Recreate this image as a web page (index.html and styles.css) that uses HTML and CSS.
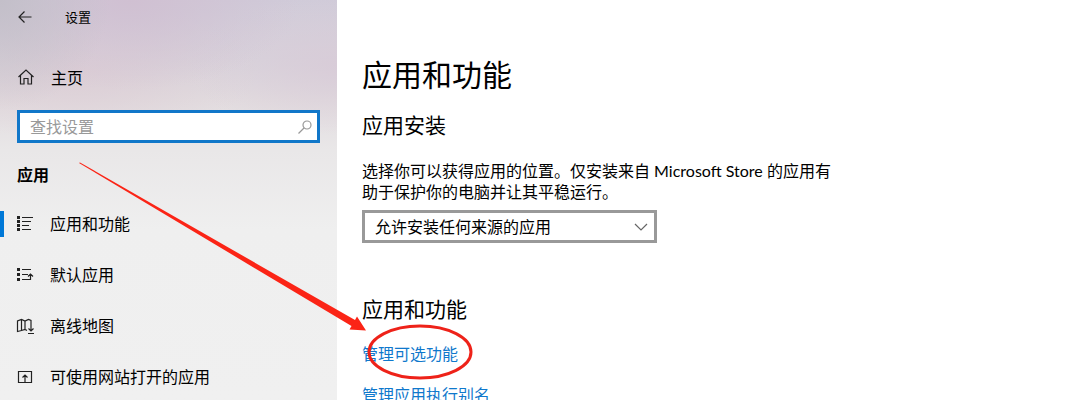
FILE: index.html
```html
<!DOCTYPE html>
<html lang="zh-CN">
<head>
    <meta charset="UTF-8">
    <meta name="viewport" content="width=device-width, initial-scale=1.0">
    <title>设置</title>
    <link rel="stylesheet" href="styles.css">
</head>
<body>
    <div class="window">
        <aside class="side">
            <header class="side-top">
                <button class="back" type="button" aria-label="返回">
                    <svg width="16" height="16" viewBox="0 0 16 16"><path d="M14.5 8H2M7.500 2.500L2 8l5.500 5.500"/></svg>
                </button>
                <span class="side-title">设置</span>
            </header>
            <a class="home" href="#">
                <svg width="18" height="18" viewBox="0 0 18 18"><path d="M1.500 9L9 2l7.500 7M3.500 7.500V16H7v-5.500h4V16h3.500V7.500"/></svg>
                <span>主页</span>
            </a>
            <form class="search">
                <input type="text" placeholder="查找设置" aria-label="查找设置">
                <button class="search-btn" type="button" aria-label="搜索">
                    <svg width="16" height="16" viewBox="0 0 16 16"><circle cx="10" cy="6" r="4"/><path d="M7 9l-5.500 5.500"/></svg>
                </button>
            </form>
            <h2 class="side-group">应用</h2>
            <nav>
                <ul class="nav-ul">
                    <li class="change"><a href="#">
                        <svg width="18" height="18" viewBox="0 0 18 18">
                            <path class="dots" d="M1 1h3v3H1zM1 5h3v3H1zM1 9h3v3H1zM1 13h3v3H1z"/>
                            <path d="M6 2.500h11M6 6.500h9M6 10.500h7M6 14.500h9"/>
                        </svg>
                        <span>应用和功能</span></a></li>
                    <li><a href="#">
                        <svg width="18" height="18" viewBox="0 0 18 18">
                            <path class="dots" d="M1 2h3v3H1zM1 7h3v3H1zM1 12h3v3H1z"/>
                            <path d="M6 3.500h9M6 8.500h6M6 13.500h8.500V8M12 10.500l2.500-2.500l2.500 2.500"/>
                        </svg>
                        <span>默认应用</span></a></li>
                    <li><a href="#">
                        <svg width="18" height="18" viewBox="0 0 18 18">
                            <path d="M11 13.500L9 12.500l-3.500 1l-4 1V4l4-1.500L9 4l3.500-1.500L15 3.500V14M5.500 2.500v11M9 4v8.500M12.500 11.500L15 14l2.500-2.500M12 16.500h6"/>
                        </svg>
                        <span>离线地图</span></a></li>
                    <li><a href="#">
                        <svg width="18" height="18" viewBox="0 0 18 18">
                            <path d="M2.500 3.500h13v11h-13zM9 14.500V7M6.500 9.500L9 7l2.500 2.500"/>
                        </svg>
                        <span>可使用网站打开的应用</span></a></li>
                </ul>
            </nav>
        </aside>
        <main class="main">
            <h1>应用和功能</h1>
            <section class="install">
                <h2>应用安装</h2>
                <p><label for="source">选择你可以获得应用的位置。仅安装来自 Microsoft Store 的应用有助于保护你的电脑并让其平稳运行。</label></p>
                <div class="select-box">
                    <select id="source">
                        <option>允许安装任何来源的应用</option>
                    </select>
                    <svg class="arrow-down" width="14" height="8" viewBox="0 0 14 8"><path d="M1 1l6 6l6-6"/></svg>
                </div>
            </section>
            <section class="features">
                <h2>应用和功能</h2>
                <a href="#">管理可选功能</a>
                <a href="#">管理应用执行别名</a>
            </section>
        </main>
        <!-- 红色标注 -->
        <svg class="mark" width="480" height="390" viewBox="0 0 480 390">
            <path d="M79 163L80 162.500L355 320L357 316.500L366 330.500L349.500 329.500L351.500 326z"/>
            <ellipse cx="420" cy="352" rx="51" ry="26"/>
        </svg>
    </div>
</body>
</html>
```

FILE: styles.css
```css
* {
    padding: 0;
    margin: 0;
    box-sizing: border-box;
    list-style: none;
}
body {
    font-family: Lato, "Noto Sans CJK SC", sans-serif;
    font-size: 16px;
    line-height: 21px;
    color: #000;
    background-color: #fff;
}
a {
    color: inherit;
    text-decoration: none;
}
svg {
    flex: none;
    fill: none;
    stroke: #222;
    stroke-width: 1.2;
}
.window {
    position: relative;
    display: flex;
    height: 100vh;
    overflow: hidden;
}
.side {
    flex: none;
    width: 337px;
    background:
        radial-gradient(ellipse 110px 110px at 0 0, #c3bfc9 0%, rgba(195, 191, 201, 0) 100%),
        radial-gradient(ellipse 170px 90px at 130px 0, #d0c0d2 0%, rgba(208, 192, 210, 0) 100%),
        radial-gradient(ellipse 150px 70px at 337px 65px, rgba(216, 202, 215, 0.8) 0%, rgba(216, 202, 215, 0) 100%),
        radial-gradient(ellipse 180px 70px at 80px 70px, rgba(220, 205, 213, 0.9) 0%, rgba(220, 205, 213, 0) 100%),
        linear-gradient(#d0cbd9 0, #d8d4dc 60px, #e2dcdf 100px, #e9e7e8 150px, #efefef 230px, #f0f0f0 100%);
}
.side-top {
    display: flex;
    align-items: center;
    height: 34px;
    padding-left: 17px;
    font-size: 13px;
}
.side button {
    display: flex;
    border: none;
    background: none;
}
.side-title {
    margin-left: 32px;
}
.home {
    display: flex;
    align-items: center;
    gap: 16px;
    height: 42px;
    margin-top: 22px;
    padding-left: 17px;
}
.search {
    display: flex;
    align-items: center;
    height: 33px;
    margin: 12px 17px 0;
    padding: 0 4px 0 10px;
    border: 3px solid #1177c9;
    background-color: #fff;
}
.search input {
    flex: 1;
    min-width: 0;
    border: none;
    outline: none;
    font: inherit;
    background: none;
}
.search input::placeholder {
    color: #999;
}
.search svg {
    stroke: #999;
}
.side-group {
    margin: 21px 0 13px 17px;
    font-size: 16px;
    line-height: 21px;
}
.nav-ul li {
    display: flex;
    align-items: center;
    height: 51px;
}
.nav-ul a {
    display: flex;
    flex: 1;
    align-items: center;
    gap: 16px;
    height: 26px;
    padding-left: 12px;
    border-left: 4px solid transparent;
}
.nav-ul .change a {
    border-left-color: #0078d7;
}
.nav-ul .dots {
    fill: #222;
    stroke: none;
}
.main {
    flex: 1;
    padding: 54px 25px 0;
}
.main h1 {
    font-size: 30px;
    font-weight: 400;
    line-height: 40px;
}
.main h2 {
    font-size: 21px;
    font-weight: 400;
    line-height: 28px;
}
.install h2 {
    margin-top: 17px;
}
.install p {
    max-width: 474px;
    margin-top: 21px;
}
.select-box {
    display: grid;
    align-items: center;
    max-width: 295px;
    margin-top: 8px;
}
.select-box select,
.select-box .arrow-down {
    grid-area: 1 / 1;
}
.select-box select {
    width: 100%;
    height: 33px;
    padding: 0 30px 0 10px;
    border: 3px solid #999;
    border-radius: 0;
    appearance: none;
    font: inherit;
    color: inherit;
    background-color: #fff;
}
.select-box .arrow-down {
    justify-self: end;
    margin-right: 9px;
    stroke: #666;
    pointer-events: none;
}
.features {
    margin-top: 52px;
}
.features a {
    display: block;
    width: fit-content;
    margin-top: 20px;
    color: #0f78cc;
}
.mark {
    position: absolute;
    left: 0;
    top: 0;
    pointer-events: none;
}
.mark path {
    fill: #fb2416;
    stroke: none;
}
.mark ellipse {
    stroke: #ee2219;
    stroke-width: 3;
}
```
